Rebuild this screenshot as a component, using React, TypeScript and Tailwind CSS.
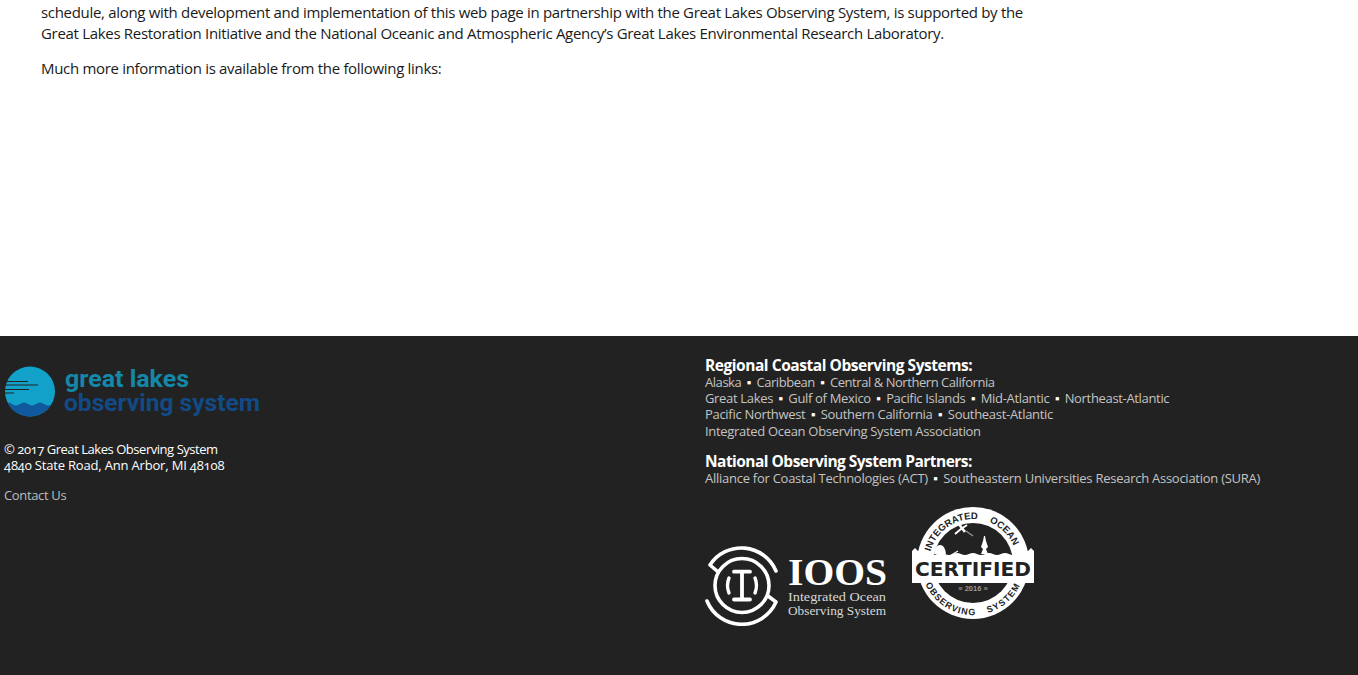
import React from "react";

const font = { fontFamily: '"Open Sans", sans-serif' };

function GlosLogo() {
  return (
    <svg width="258" height="54" viewBox="0 0 258 54" className="block">
      <defs>
        <clipPath id="glosc"><circle cx="26" cy="27.5" r="25" /></clipPath>
      </defs>
      <circle cx="26" cy="27.5" r="25" fill="#12a1c9" />
      <g clipPath="url(#glosc)">
        <path d="M0 41 q4 -4 8 -1 q4 3 8 0 q4 -3 8 0 q4 3 8 0 q4 -3 8 0 q4 3 8 0 q3 -2 6 0 V54 H0 Z" fill="#10599e" />
      </g>
      <path d="M1 17.5H24M1 21H34M1 25.5H25M1 29H10" stroke="#222" strokeWidth="1.1" />
      <text x="61" y="23" fontFamily="Roboto, sans-serif" fontWeight="700" fontSize="24" textLength="124" lengthAdjust="spacingAndGlyphs" fill="#1488a8">great lakes</text>
      <text x="60" y="47" fontFamily="Roboto, sans-serif" fontWeight="700" fontSize="24" textLength="196" lengthAdjust="spacingAndGlyphs" fill="#114a86">observing system</text>
    </svg>
  );
}

function IoosLogo() {
  return (
    <svg width="182" height="80" viewBox="0 0 182 80" className="block">
      <g fill="none" stroke="#fff" strokeLinecap="round" strokeLinejoin="round">
        <path d="M71 25 A37.5 37.5 0 0 0 5 19 L12 25" strokeWidth="3.6" />
        <path d="M2 55 A37.5 37.5 0 0 0 71 56 L63 50" strokeWidth="3.6" />
        <circle cx="37" cy="39.5" r="27" strokeWidth="3.6" />
        <path d="M24 32 Q21 39.5 24 47 M50 32 Q53 39.5 50 47" strokeWidth="3.4" />
      </g>
      <path d="M29 25.7 H45 M29 53.5 H45 M37 25.7 V53.5" fill="none" stroke="#fff" strokeWidth="3.8" strokeLinecap="round" />
      <text x="83" y="39" fontFamily='"Liberation Serif", serif' fontWeight="700" fontSize="37" textLength="99" lengthAdjust="spacingAndGlyphs" fill="#fff">IOOS</text>
      <text x="83" y="55" fontFamily='"Liberation Serif", serif' fontSize="12.5" textLength="98" lengthAdjust="spacingAndGlyphs" fill="#d8d8d8">Integrated Ocean</text>
      <text x="83" y="69" fontFamily='"Liberation Serif", serif' fontSize="12.5" textLength="98" lengthAdjust="spacingAndGlyphs" fill="#d8d8d8">Observing System</text>
    </svg>
  );
}

function Certified() {
  const ring = { fontFamily: '"Liberation Sans", sans-serif', fontWeight: 700 };
  return (
    <svg width="122" height="112" viewBox="0 0 122 112" className="block">
      <defs>
        <path id="certTop" d="M18.3 45.4 A44 44 0 0 1 103.7 45.4" />
        <path id="certBot" d="M13.1 76.3 A52 52 0 0 0 108.9 76.3" />
      </defs>
      <circle cx="61" cy="56" r="56" fill="#fff" />
      <circle cx="61" cy="56" r="40" fill="#222" />
      <g fill="#fff">
        <path d="M22 47 q1 -9 6 -9 q5 0 6 9 Z" />
        <path d="M69 47 l2 -5 l-2 -2 l2 -6 l1 -5 h1 l1 5 l2 6 l-2 2 l2 5 Z" />
      </g>
      <g stroke="#fff" fill="none">
        <path d="M43 27 L49 22 M49 22 L55 18" strokeWidth="2" />
        <path d="M46 16 L53 25" strokeWidth="2.6" />
        <path d="M54 24 L61 29" strokeWidth="1.2" stroke="#999" />
        <path d="M36 50 L46 44" strokeWidth="1.2" />
      </g>
      <path d="M0 44 l3 -3 l3 3 h3 V48 q4 -3 8 -1 q4 2 8 0 q4 -2 8 0 q4 2 8 0 q4 -2 8 0 q4 2 8 0 q4 -2 8 0 q4 2 8 0 q4 -2 8 0 q4 2 8 0 q4 -2 8 0 q4 2 8 0 q4 -2 8 0 L113 44 h3 l3 -3 l3 3 V76 H0 Z" fill="#fff" />
      <text x="61" y="69" textAnchor="middle" fontFamily='"DejaVu Sans", sans-serif' fontWeight="700" fontSize="19" textLength="116" lengthAdjust="spacingAndGlyphs" fill="#222">CERTIFIED</text>
      <text x="61" y="84" textAnchor="middle" fontFamily='"Liberation Sans", sans-serif' fontWeight="700" fontSize="7.5" fill="#999">≡ 2016 ≡</text>
      <text {...ring} fontSize="9.5" letterSpacing="0.1" fill="#222">
        <textPath href="#certTop" startOffset="1">INTEGRATED</textPath>
      </text>
      <text {...ring} fontSize="9.5" letterSpacing="0.1" fill="#222">
        <textPath href="#certTop" startOffset="75">OCEAN</textPath>
      </text>
      <text {...ring} fontSize="9" letterSpacing="1" fill="#222">
        <textPath href="#certBot" startOffset="1">OBSERVING</textPath>
      </text>
      <text {...ring} fontSize="9" letterSpacing="1.2" fill="#222">
        <textPath href="#certBot" startOffset="76">SYSTEM</textPath>
      </text>
    </svg>
  );
}

const Dot = () => <span className="mx-[5.5px] text-[13px] text-white">▪</span>;

function Links({ items, className }: { items: string[]; className: string }) {
  return (
    <div className={`h-4 whitespace-nowrap ${className}`}>
      {items.map((t, i) => (
        <React.Fragment key={t}>
          {i > 0 && <Dot />}
          {t}
        </React.Fragment>
      ))}
    </div>
  );
}

export default function App() {
  return (
    <div className="h-[675px] overflow-hidden bg-white oldstyle-nums" style={font}>
      <main className="h-[336px] overflow-hidden px-[41px] pt-[2px] text-[15px] leading-[21px] tracking-[-0.31px] text-[#1a1a1a]">
        <p className="w-[1000px] whitespace-nowrap">
          schedule, along with development and implementation of this web page in partnership with the Great Lakes Observing System, is supported by the
          <br />
          Great Lakes Restoration Initiative and the National Oceanic and Atmospheric Agency’s Great Lakes Environmental Research Laboratory.
        </p>
        <p className="mt-[14px]">Much more information is available from the following links:</p>
      </main>
      <footer className="flex h-[339px] bg-[#222222]">
        <div className="w-[705px] pl-1 pt-[28px]">
          <GlosLogo />
          <div className="mt-[23px] text-[13px] leading-[16px] text-white">
            <div className="tracking-[-0.46px]">© 2017 Great Lakes Observing System</div>
            <div className="tracking-[-0.18px]">4840 State Road, Ann Arbor, MI 48108</div>
          </div>
          <div className="mt-[14px] text-[13px] leading-[16px] tracking-[-0.35px] text-[#bdbdbd]">Contact Us</div>
        </div>
        <div className="flex-1 pt-[19px] text-[13px] leading-[16px] text-[#c4c4c4]">
          <h2 className="h-[19px] text-[15.5px] font-bold leading-[20px] tracking-[-0.45px] text-white">Regional Coastal Observing Systems:</h2>
          <Links className="tracking-[-0.45px]" items={["Alaska", "Caribbean", "Central & Northern California"]} />
          <Links className="tracking-[-0.33px]" items={["Great Lakes", "Gulf of Mexico", "Pacific Islands", "Mid-Atlantic", "Northeast-Atlantic"]} />
          <Links className="tracking-[-0.3px]" items={["Pacific Northwest", "Southern California", "Southeast-Atlantic"]} />
          <div className="h-4 pt-[1px] tracking-[-0.31px]">Integrated Ocean Observing System Association</div>
          <h2 className="mt-[13px] h-[19px] text-[15.5px] font-bold leading-[20px] tracking-[-0.53px] text-white">National Observing System Partners:</h2>
          <Links className="tracking-[-0.26px]" items={["Alliance for Coastal Technologies (ACT)", "Southeastern Universities Research Association (SURA)"]} />
          <div className="mt-[21px] flex items-end gap-[25px]">
            <IoosLogo />
            <div className="mb-[7px]"><Certified /></div>
          </div>
        </div>
      </footer>
    </div>
  );
}
